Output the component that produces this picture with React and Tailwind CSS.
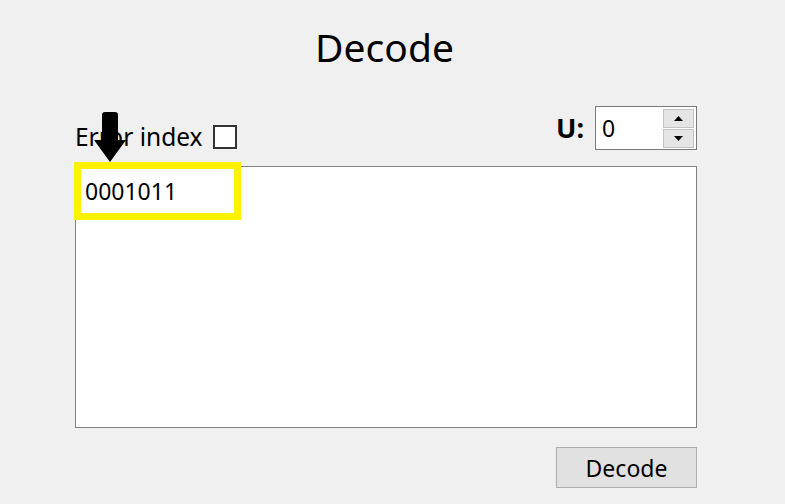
export default function App() {
  const font = { fontFamily: '"Noto Sans", "Open Sans", sans-serif' };
  return (
    <div className="w-[785px] h-[504px] bg-[#f0f0f0] text-black overflow-hidden" style={font}>
      <div className="flex justify-center pr-[16px] pt-[21px] text-[39px] leading-[52px]">Decode</div>
      <div className="ml-[75px] w-[622px] mt-[33px]">
        <div className="flex justify-between items-end">
          <div className="flex items-end gap-[10px] pb-[1px]">
            <span className="text-[24.5px] leading-[28px] mb-[-2px]">Error index</span>
            <div className="w-[24px] h-[24px] border-2 border-[#333333] bg-white"></div>
          </div>
          <div className="flex items-center gap-[11px]">
            <span className="text-[27px] font-bold leading-[30px]">U:</span>
            <div className="w-[102px] h-[44px] border border-[#7a7a7a] bg-white flex items-center justify-between pl-[6px] pr-[2px]">
              <span className="text-[23px] leading-[28px]">0</span>
              <div className="flex flex-col w-[31px] h-[39px] gap-[1px]">
                <div className="flex-1 bg-[#e5e5e5] border border-[#c4c4c4] flex items-center justify-center">
                  <svg width="9" height="5" viewBox="0 0 9 5"><polygon points="0,5 9,5 4.5,0" fill="#000" /></svg>
                </div>
                <div className="flex-1 bg-[#e5e5e5] border border-[#c4c4c4] flex items-center justify-center">
                  <svg width="9" height="5" viewBox="0 0 9 5"><polygon points="0,0 9,0 4.5,5" fill="#000" /></svg>
                </div>
              </div>
            </div>
          </div>
        </div>
        <div className="relative mt-[16px] h-[262px] border border-[#828282] bg-white">
          <div className="absolute left-[-2px] top-[-5px] w-[167px] h-[58px] border-[7px] border-[#fff200] bg-white flex items-center pl-[4px]">
            <span className="text-[23px] leading-[28px]">0001011</span>
          </div>
          <svg className="absolute left-[16px] top-[-55px]" width="38" height="52" viewBox="0 0 38 52">
            <path d="M10 3 Q10 0 13 0 L23 0 Q26 0 26 3 L26 28 L34 28 L18 50 L2 28 L10 28 Z" fill="#000" />
          </svg>
        </div>
        <div className="flex justify-end mt-[19px]">
          <button className="w-[141px] h-[41px] bg-[#e1e1e1] border border-[#adadad] text-[23px] leading-[28px]" style={font}>Decode</button>
        </div>
      </div>
    </div>
  );
}
